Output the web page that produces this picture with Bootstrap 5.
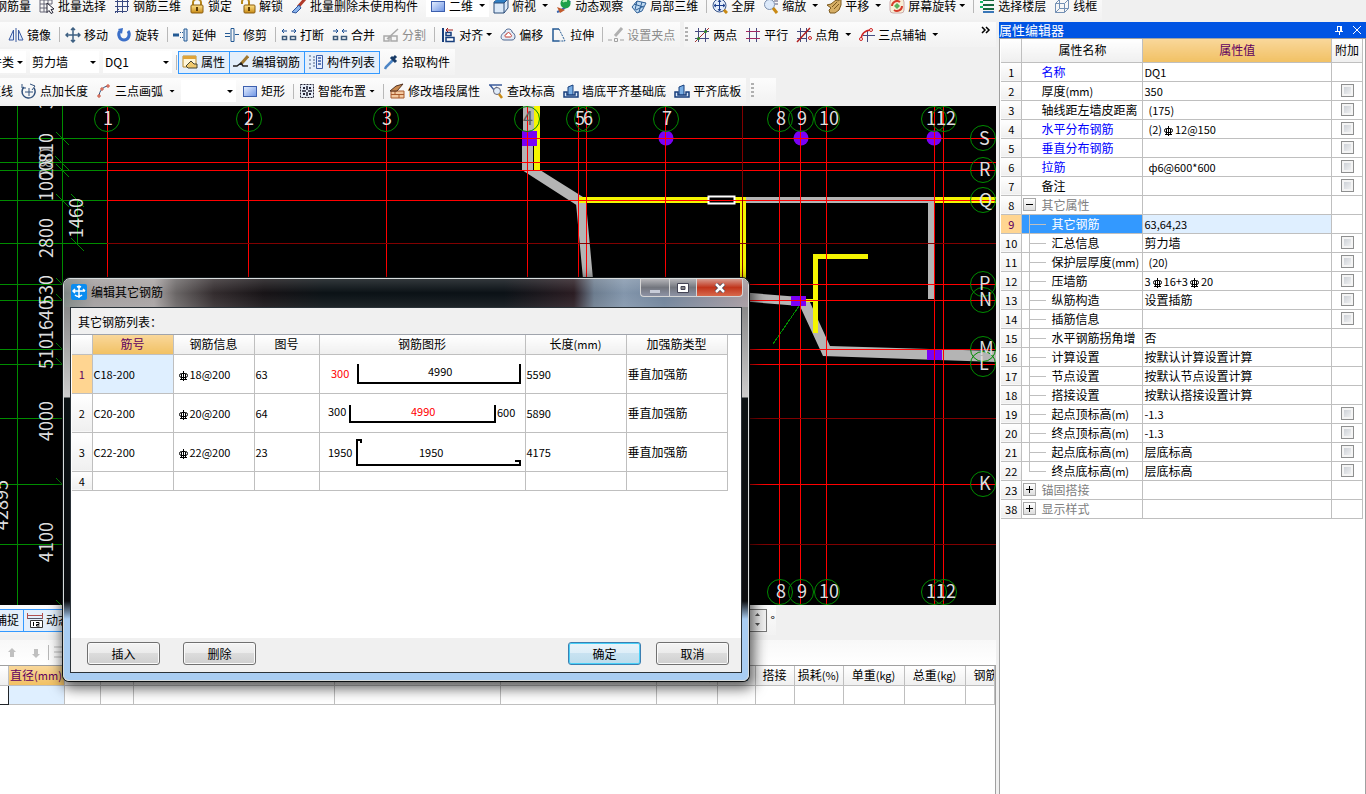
<!DOCTYPE html>
<html lang="zh-CN">
<head>
<meta charset="utf-8">
<meta name="viewport" content="width=device-width, initial-scale=1">
<title>编辑其它钢筋</title>
<link href="https://cdn.jsdelivr.net/npm/bootstrap@5.3.0/dist/css/bootstrap.min.css" rel="stylesheet">
<style>
  body { font: 12px/16px "Noto Sans CJK SC", sans-serif; color: #000; background: #f0f0f0; overflow: hidden; }
  svg { flex: none; }
  .ic { width: 16px; height: 16px; display: block; }
  .num { font-size: 11px; }

  /* toolbars */
  .bar-row { height: 26px; overflow: hidden; }
  .bar-row.first { height: 20px; align-items: flex-end; }
  .bar-row.first .strip { height: 29px; }
  .bar-row.second { height: 25px; margin: 2px 0; }
  .bar-row.third { margin-bottom: 3px; }
  .bar-row.fourth { margin-bottom: 2px; }
  .strip { height: 100%; display: flex; align-items: center; flex: none; background: linear-gradient(#fcfcfc, #f2f2f2); padding-right: 1px; }
  .tool { display: flex; align-items: center; gap: 3px; height: 22px; padding: 0 4px; border: 0; background: none; white-space: nowrap; color: inherit; }
  .tool:disabled { color: #8c8c8c; }
  .tool.toggled { height: 23px; padding: 0 4px 0 3px; border: 1px solid #3399ff; background: #e4effb; margin-right: -1px; }
  .tool .caret { width: 6px; height: 3px; background: #000; clip-path: polygon(0 0, 100% 0, 50% 100%); }
  .tool .caret.wide { margin-left: 3px; }
  .more { height: 15px; }
  .sep { width: 1px; height: 15px; background: #b8b8b8; margin: 0 1px 0 4px; flex: none; }
  .dots { width: 3px; height: 16px; margin: 0 2px 0 1px; background: repeating-linear-gradient(#b0b0b0 0 2px, transparent 2px 4px); flex: none; }
  .combo { height: 22px; padding: 0 20px 0 2px; border: 0; border-radius: 0; font-size: 12px; line-height: 20px; color: #000; background-color: #fff; background-size: 6px 3px; background-position: right 3px center;
    background-image: url("data:image/svg+xml,%3Csvg xmlns='http://www.w3.org/2000/svg' viewBox='0 0 6 3'%3E%3Cpath d='M0 0h6L3 3z'/%3E%3C/svg%3E"); }
  .combo.kind { width: 50px; padding-right: 10px; margin-left: -24px; }
  .combo.wall { width: 69px; }
  .combo.arc { width: 55px; margin: 0 2px; }
  .clipped-start { margin-left: -11px; }
  .clipped-first { margin-left: -9px; }

  /* drawing canvas */
  .plan { background: #000; flex: 1 1 0; min-height: 0; overflow: hidden; }
  .plan svg { width: 100%; height: 100%; display: block; }
  .plan text { font: 18px "Noto Sans CJK SC", sans-serif; fill: #dedede; }
  .plan text.dim { fill: #5c5c5c; }

  /* grids */
  .grid { table-layout: fixed; border-collapse: collapse; font-size: 12px; line-height: 16px; }
  .grid th, .grid td { border: 1px solid #bfbfbf; border-top: 0; border-left: 0; padding: 0 0 0 1px; font-weight: 400; white-space: nowrap; overflow: hidden; background: #fff; }
  .grid th { text-align: center; background: linear-gradient(#fff, #efefef); padding: 0; }
  .grid thead th.hot { background: linear-gradient(#f9d79a, #f1c164); color: #600060; }
  .grid tbody th { font-size: 11px; }
  .grid tbody th.hot { background: #ffd591; color: #600060; }
  .grid td.pick { background: #dfefff; }
  .bar-mark { width: 9px; height: 10px; margin: 0 2px; }
  td > .bar-mark { margin-left: 4px; }

  /* property panel */
  .props { width: 370px; flex: none; }
  .props-title { height: 16px; background: #0054e3; color: #fff; font-size: 13px; margin: 2px 0 0 3px; }
  .props-title button { border: 0; background: none; padding: 0; color: #fff; width: 18px; height: 16px; }
  .props-body { margin-left: 3px; border: 1px solid #a0a0a0; border-bottom: 0; padding: 0 2px 0 1px; background: #fff; }
  .props .grid tr { height: 19px; }
  .props .grid thead tr { height: 23px; }
  .cell-name { display: flex; align-items: center; height: 18px; overflow: hidden; padding-left: 19px; line-height: 18px; }
  .cell-name.leaf { padding-left: 7px; }
  .cell-name.leaf::before { content: ""; width: 17px; height: 18px; margin-right: 5px; flex: none; border-left: 1px solid #bfbfbf; background: linear-gradient(#bfbfbf, #bfbfbf) 0 9px / 17px 1px no-repeat; }
  .cell-name.end::before { height: 10px; align-self: flex-start; }
  .cell-name.group { padding-left: 1px; color: #808080; }
  .cell-name.link { color: #0000ff; }
  .picked .cell-name { background: #3399ff; color: #fff; }
  .fold { width: 13px; height: 13px; border: 1px solid #a8a8a8; background: linear-gradient(#fff, #ddd); padding: 0; margin-right: 5px; display: flex; flex: none; }
  .tick { appearance: none; width: 13px; height: 13px; margin: 0; display: block; border: 1px solid #8e8f8f; background: linear-gradient(135deg, #c4c9d0, #f8f8f8) padding-box; box-shadow: inset 0 0 0 2px #f4f4f4; }

  /* lower panes */
  .lower { height: 189px; flex: none; }
  .snap { height: 34px; }
  .snap .strip { height: 30px; width: 776px; }
  .mini { height: 26px; padding-top: 1px; }
  .mini .strip { width: 100%; padding-left: 4px; background: linear-gradient(#f8f8f8, #fff); }
  .spin { width: 80px; height: 23px; border: 1px solid #777; background: #fff; }
  .spin input { width: 60px; border: 0; padding: 0; }
  .spin button { width: 16px; height: 10px; border: 0; padding: 0; background: #f4f4f4; display: flex; align-items: center; justify-content: center; }
  .lower .grid tr { height: 19px; }
  .sheet { flex: 1; background: #fff; border-top: 1px solid #a0a0a0; border-right: 1px solid #a0a0a0; overflow: hidden; }

  /* dialog */
  .dlg { position: absolute; left: 63px; top: 278px; width: 686px; border: 1px solid #d8dcdc; border-radius: 7px 7px 6px 6px; padding: 0 6px 7px; overflow: hidden; box-shadow: 2px 4px 14px 3px rgba(0,0,0,.65), 0 0 0 1px #1a2226;
    background: linear-gradient(#77807d 0, #888 26px, #ccc 118px, #0b1214 119px, #0b0d10 322px, #a9cdf2 340px); }
  .dlg-head { height: 28px; margin: 0 -6px; padding: 0 5px 2px 7px; display: flex; gap: 4px;
    background: linear-gradient(rgba(255,255,255,.16), rgba(255,255,255,0) 50%, rgba(255,255,255,.08)), linear-gradient(to right, #7c8482 0, #a29e9e 30px, #a8a3a3 90px, #6a6666 112px, #332c2e 150px, #171316 200px, #0b1216 260px, #0b1116 440px, #2a1c22 510px, #6c7c8e 530px, #8396ac 560px, #70839a 600px, #a59aa0 684px); }
  .dlg-body { border: 1px solid #2a3238; background: #f0f0f0; display: flex; flex-direction: column; }
  .dlg-label { height: 26px; line-height: 28px; padding-left: 7px; }
  .dlg-list { height: 304px; background: #fff; border-top: 1px solid #a0a4ac; padding-left: 1px; }
  .dlg-list .grid tr { height: 39px; }
  .dlg-list .grid thead tr { height: 19px; }
  .dlg-list .grid tr.blank { height: 19px; }
  .dlg-list .grid svg text { font: 11px "Noto Sans CJK SC", sans-serif; }
  .dlg-foot { display: flex; gap: 23px; padding: 4px 12px 7px 16px; }
  .cap { height: 18px; padding: 0; border: 1px solid #d5d5d5; border-top: 0; border-right: 0; background: linear-gradient(#b5b5b9, #73767e 50%, #8d92a4); display: flex; justify-content: center; align-items: center; }
  .cap.shut { width: 47px; border-right: 1px solid #d5d5d5; border-radius: 0 0 4px 0; background: linear-gradient(#d89a8e, #c1351c 50%, #d8694c); }
  .cap.lo { width: 29px; border-radius: 0 0 0 4px; }
  .cap.mid { width: 27px; }
  .push { height: 23px; border: 1px solid #707070; border-radius: 3px; padding: 0; width: 73px; font-size: 12px; line-height: 20px; color: #000; background: linear-gradient(#f4f4f4, #ebebeb 49%, #dcdcdc 50%, #cfcfcf); box-shadow: inset 0 0 0 1px #fafafa; }
  .push.go { border-color: #3c7fb1; background: linear-gradient(#eaf3f9, #ddeef8 49%, #c8e2f1 50%, #bcdcec); box-shadow: inset 0 0 0 1px #48d0f8; margin-right: -8px; }
</style>
</head>
<body>

<svg width="0" height="0" class="position-absolute" aria-hidden="true">
  <defs>
    <linearGradient id="gb" x1="0" y1="0" x2="1" y2="1"><stop offset="0" stop-color="#e8f1ff"/><stop offset="1" stop-color="#6c93e4"/></linearGradient>
    <linearGradient id="gy" x1="0" y1="0" x2="0" y2="1"><stop offset="0" stop-color="#ffe38a"/><stop offset="1" stop-color="#c98a14"/></linearGradient>
    <symbol id="i-batch" viewBox="0 0 16 16"><path d="M1 2h12M1 6h12M1 10h8M1 14h8M1 1v13M5 1v13M9 1v9M13 1v5" stroke="#667" fill="none"/><path d="M8 5l7 6-3 .5 2 3-2 1-2-3-2 2z" fill="#fff" stroke="#223"/></symbol>
    <symbol id="i-net" viewBox="0 0 16 16"><path d="M1 3.500h14M1 8.500h14M1 13.500h12M3.500 1v14M8.500 1v14M13.500 1v12M1 15l4-4M12 4l3-3" stroke="#3a4a80" fill="none"/></symbol>
    <symbol id="i-lock" viewBox="0 0 16 16"><path d="M4 8V4.500a4 3.500 0 0 1 8 0V8" fill="none" stroke="#b5851a" stroke-width="2"/><rect x="2" y="7" width="12" height="8" rx="1" fill="url(#gy)" stroke="#8a5d10"/><path d="M8 9v4" stroke="#5b3b05" stroke-width="2"/></symbol>
    <symbol id="i-unlock" viewBox="0 0 16 16"><path d="M2 6V4a3 3 0 0 1 7 0v4" fill="none" stroke="#b5851a" stroke-width="2"/><rect x="4" y="7" width="11" height="8" rx="1" fill="url(#gy)" stroke="#8a5d10"/><path d="M9 9v4" stroke="#5b3b05" stroke-width="2"/></symbol>
    <symbol id="i-brush" viewBox="0 0 16 16"><path d="M14 1L7 9" stroke="#b03a2a" stroke-width="3"/><path d="M8 7l2 3-5 5-4-1z" fill="#8ab4ec" stroke="#31569c"/></symbol>
    <symbol id="i-rect" viewBox="0 0 16 16"><rect x="1.500" y="3.500" width="13" height="10" fill="url(#gb)" stroke="#3c5fae"/></symbol>
    <symbol id="i-cube" viewBox="0 0 16 16"><path d="M1 4l4-3h10v9l-4 5H1z" fill="#dbe9f8" stroke="#2b4c78"/><path d="M1 4l4-3h10l-4 4H1z" fill="#2f7fc4"/><path d="M11 5v10M1 5h10l4-4" fill="none" stroke="#2b4c78"/></symbol>
    <symbol id="i-orbit" viewBox="0 0 16 16"><path d="M1 14c4-1 10-5 13-11" stroke="#3665b0" stroke-width="2" fill="none"/><circle cx="9.500" cy="5.500" r="5" fill="#1ea04a"/><path d="M7 4a3 2 0 0 1 4-1" stroke="#b8f0b8" fill="none" stroke-width="2"/><path d="M1 9l8 3-5 3z" fill="#c25a2c"/></symbol>
    <symbol id="i-local" viewBox="0 0 16 16"><path d="M1 9l5-6 9 2-4 8-5 2z" fill="#bfdaf2" stroke="#2e5f96"/><path d="M3 6l9 3M6 3L4 12M11 4L8 14M5 12l8-4" stroke="#2e5f96" fill="none"/></symbol>
    <symbol id="i-full" viewBox="0 0 16 16"><circle cx="7.500" cy="7.500" r="6.500" fill="#e4edfa" stroke="#38568c"/><path d="M7.500 2v11M2 7.500h11M6 4l1.500-2L9 4M6 11l1.500 2L9 11M4 6L2 7.500 4 9M11 6l2 1.500L11 9" stroke="#1c3f8c" fill="none"/><path d="M12 12l3 3" stroke="#c98a14" stroke-width="3"/></symbol>
    <symbol id="i-zoom" viewBox="0 0 16 16"><circle cx="6.500" cy="6.500" r="5" fill="#dce9fa" stroke="#7c8fae"/><path d="M10 10l4 5" stroke="#c98a14" stroke-width="3"/><path d="M11 3h4M12 6h3" stroke="#557"/></symbol>
    <symbol id="i-hand" viewBox="0 0 16 16"><path d="M1 7l4-1 5-4 2 1 3-2v6l-2 5-4 3H4l-1-3 2-2z" fill="#d6ae66" stroke="#7d5a1e"/><path d="M6 9l5-5M8 11l5-5" stroke="#7d5a1e"/></symbol>
    <symbol id="i-spin" viewBox="0 0 16 16"><rect x="1" y="1" width="14" height="14" rx="3" fill="#f7f0d8" stroke="#caa"/><path d="M3 8a5 5 0 0 1 8-4M13 8a5 5 0 0 1-8 4" stroke="#d63c2a" stroke-width="2" fill="none"/><path d="M5 8l3-3 3 3-3 3z" fill="#5bb15a"/></symbol>
    <symbol id="i-floor" viewBox="0 0 16 16"><path d="M4 2h11M4 7h11M4 11h11" stroke="#16693d" stroke-width="2"/><path d="M1 4h3M1 9h3" stroke="#1b6" stroke-width="2"/><path d="M4 13h11v2H4z" fill="#3a77b8"/></symbol>
    <symbol id="i-wire" viewBox="0 0 16 16"><path d="M1.500 5.500h9v9h-9zM5.500 1.500h9v9h-9zM1.500 5.500l4-4M10.500 5.500l4-4M1.500 14.500l4-4M10.500 14.500l4-4" fill="none" stroke="#7390b4"/></symbol>
    <symbol id="i-mirror" viewBox="0 0 16 16"><path d="M5.500 3v10H1zM10.500 3v10H15z" fill="#dfe9fb" stroke="#3a5aa0"/><path d="M8 1v14" stroke="#3a5aa0"/></symbol>
    <symbol id="i-move" viewBox="0 0 16 16"><path d="M8 1v14M1 8h14M6 3l2-2 2 2M6 13l2 2 2-2M3 6L1 8l2 2M13 6l2 2-2 2" fill="none" stroke="#3f6183" stroke-width="1.500"/></symbol>
    <symbol id="i-rot" viewBox="0 0 16 16"><path d="M4 4C1 8 4 13 8 13s7-5 4-9" fill="none" stroke="#3b6fc8" stroke-width="3"/><path d="M7 1L2 2l4 5z" fill="#3b6fc8"/></symbol>
    <symbol id="i-extend" viewBox="0 0 16 16"><path d="M0 8h6" stroke="#245a94" stroke-width="3"/><path d="M7 5.500h3M7 10.500h3" stroke="#245a94" stroke-dasharray="1 1"/><path d="M11 2h3v12h-3z" fill="#cfe0f4" stroke="#245a94"/></symbol>
    <symbol id="i-trim" viewBox="0 0 16 16"><path d="M1 6.500h5M1 9.500h5M7 1.500h3v13H7zM11 7.500h4" fill="none" stroke="#245a94"/></symbol>
    <symbol id="i-break" viewBox="0 0 16 16"><path d="M1 4h5M10 4h5M3 2L1 4l2 2M13 2l2 2-2 2" stroke="#1c4f94" fill="none"/><path d="M1.500 9.500h4v3h-4zM9.500 9.500h5v3h-5z" fill="#fff" stroke="#3b5878" stroke-width="1.500"/></symbol>
    <symbol id="i-join" viewBox="0 0 16 16"><path d="M1 4h5M10 4h5M4 2l2 2-2 2M12 2l-2 2 2 2" stroke="#1c4f94" fill="none"/><path d="M1.500 9.500h4v3h-4zM9.500 9.500h5v3h-5z" fill="#fff" stroke="#3b5878" stroke-width="1.500"/></symbol>
    <symbol id="i-split" viewBox="0 0 16 16"><path d="M1 9h5v5H1zM8 9h6v5H8zM4 12L15 2" stroke="#a9a9a9" fill="none" stroke-width="1.500"/></symbol>
    <symbol id="i-align" viewBox="0 0 16 16"><path d="M3 1v14" stroke="#173e7c" stroke-width="2"/><path d="M6 5.500h5v3H6zM6 10.500h8v4H6z" fill="#fff" stroke="#173e7c" stroke-width="1.500"/><path d="M13 3H6l2-2M6 3l2 2" stroke="#a01b1b" fill="none"/></symbol>
    <symbol id="i-offset" viewBox="0 0 16 16"><path d="M5 5c0-4 7-4 7 0 4 2 4 8 0 8H4C0 13 0 7 5 5z" fill="#e4ebf5" stroke="#4c6690"/><path d="M7 7c0-2 3-2 3 0 2 1 2 3 0 3H6C4 10 5 7 7 7z" fill="#fff" stroke="#c4392d"/></symbol>
    <symbol id="i-stretch" viewBox="0 0 16 16"><path d="M8 2H2v12h6" fill="none" stroke="#245a94" stroke-width="1.500"/><path d="M8 2l6 12H8" fill="none" stroke="#245a94" stroke-dasharray="2 1"/></symbol>
    <symbol id="i-clamp" viewBox="0 0 16 16"><path d="M14 1L7 9" stroke="#b0b0b0" stroke-width="3"/><path d="M0 13h4M12 13h4M6.500 11.500h3v3h-3z" stroke="#a0a0a0" fill="none"/></symbol>
    <symbol id="i-two" viewBox="0 0 16 16"><path d="M4.500 1v14M11.500 1v14M1 4.500h14M1 11.500h14" stroke="#454a7e"/><path d="M1 15L15 1" stroke="#a03030"/><circle cx="4.500" cy="11.500" r="1.500" fill="#2b8a2b"/><circle cx="11.500" cy="4.500" r="1.500" fill="#2b8a2b"/></symbol>
    <symbol id="i-para" viewBox="0 0 16 16"><path d="M4.500 1v14M11.500 1v14" stroke="#454a7e"/><path d="M1 4.500h14M1 11.500h14" stroke="#a02860"/></symbol>
    <symbol id="i-angle" viewBox="0 0 16 16"><path d="M4.500 1v14M10.500 1v14M1 4.500h14M1 11.500h10" stroke="#454a7e"/><path d="M1 15L14 1" stroke="#b02020" stroke-width="1.500"/><circle cx="14" cy="11" r="1.500" fill="none" stroke="#c22"/></symbol>
    <symbol id="i-aux" viewBox="0 0 16 16"><path d="M8.500 3v12M4 8.500h12" stroke="#454a7e"/><path d="M2 13c0-6 4-10 10-10" fill="none" stroke="#c22" stroke-width="1.500"/><circle cx="2" cy="12" r="1.500" fill="#fff" stroke="#c22"/><circle cx="12" cy="3" r="1.500" fill="#fff" stroke="#c22"/></symbol>
    <symbol id="i-prop" viewBox="0 0 16 16"><path d="M1 2h13v11H1z" fill="#fff6d8" stroke="#b98b2c"/><path d="M1 2h13v3H1z" fill="#e0a43a"/><path d="M4 12l5-5 3 3h3v4H6z" fill="#f0c96c" stroke="#443"/></symbol>
    <symbol id="i-edit" viewBox="0 0 16 16"><path d="M15 2L8 10" stroke="#a07830" stroke-width="3"/><path d="M0 12h4l4-3 2 3h5" stroke="#222" fill="none" stroke-width="1.500"/></symbol>
    <symbol id="i-list" viewBox="0 0 16 16"><path d="M1 2h3M1 6h3M1 10h3M1 14h3M6 2v12" stroke="#4a5f84" stroke-dasharray="2 1"/><path d="M8.500 1.500h6v13h-6z" fill="#e6eefc" stroke="#3b5ea8"/><path d="M10 4h3M10 7h3M10 10h3" stroke="#3b5ea8" stroke-width="1.500"/></symbol>
    <symbol id="i-pick" viewBox="0 0 16 16"><path d="M10 6l-7 7-1 2" stroke="#4d86c6" stroke-width="2.500" fill="none"/><path d="M8 3l5 5M10 5l3-3" stroke="#173a66" stroke-width="3"/></symbol>
    <symbol id="i-plen" viewBox="0 0 16 16"><path d="M3 4a6.500 6.500 0 1 0 10 1" fill="none" stroke="#33527c" stroke-width="1.500"/><path d="M8 5v8M4 9h8M1 1v4h4M9 1l5 2-3 4" stroke="#33527c" fill="none"/></symbol>
    <symbol id="i-arc" viewBox="0 0 16 16"><path d="M3 14C3 8 7 3 13 3" stroke="#33527c" fill="none"/><path d="M2 12h2v2H2zM5 5h2v2H5zM11 2h2v2h-2z" fill="#fff" stroke="#c8452c"/></symbol>
    <symbol id="i-smart" viewBox="0 0 16 16"><rect x="1.500" y="1.500" width="13" height="13" fill="#e6edf8" stroke="#223" stroke-dasharray="2 1"/><path d="M8 3v4M8 9v4M3 8h4M9 8h4" stroke="#223" stroke-width="1.500"/><path d="M4 4h2v2H4zM10 4h2v2h-2zM4 10h2v2H4zM10 10h2v2h-2z" fill="#223"/></symbol>
    <symbol id="i-wall" viewBox="0 0 16 16"><path d="M2 8h13v7H2z" fill="#f2c9a0" stroke="#a85a2c"/><path d="M2 11.500h13M6 8v3M10 11v4" stroke="#a85a2c"/><path d="M1 8l6-5 7-2-6 7z" fill="#c98a50" stroke="#532"/></symbol>
    <symbol id="i-elev" viewBox="0 0 16 16"><path d="M1 2h13M2 2l4 5 3-3" stroke="#3c5c9c" fill="none" stroke-width="1.500"/><circle cx="9" cy="8" r="3.500" fill="#e0ecfa" stroke="#667"/><path d="M11 11l3 4" stroke="#c98a14" stroke-width="2.500"/></symbol>
    <symbol id="i-base" viewBox="0 0 16 16"><path d="M5 12V4l5-2v10" fill="#79aee4" stroke="#173e7c"/><path d="M1 14V9h3v3h8V9h3v5z" fill="#d6e6f8" stroke="#173e7c" stroke-width="1.500"/></symbol>
    <symbol id="i-dyn" viewBox="0 0 16 16"><path d="M.500 1v6M15.500 1v6M1 3.500h14" stroke="#b05050" fill="none"/><path d="M1 6.500h14" stroke="#556"/><path d="M3.500 8.500h12v7h-12z" fill="#fff" stroke="#333"/><path d="M6.500 10v4M9 10.500h3v2H9.500v1.500h3" stroke="#000" fill="none"/></symbol>
    <symbol id="i-up" viewBox="0 0 16 16"><path d="M8 3l4 4H10v5H6V7H4z" fill="#c0c0c0"/></symbol>
    <symbol id="i-down" viewBox="0 0 16 16"><path d="M8 13l4-4H10V4H6v5H4z" fill="#c0c0c0"/></symbol>
    <symbol id="i-rows" viewBox="0 0 16 16"><path d="M0 2h16M0 7h16M0 12h16" stroke="#bbb"/></symbol>
    <symbol id="rebar" viewBox="0 0 9 10"><path d="M2.500 2.500h4q2 0 2 2t-2 2h-4q-2 0-2-2t2-2zM4.500 0v10M2.500 3v6M6.500 3v6M1 8.500h7" fill="none" stroke="#000"/></symbol>
  </defs>
</svg>

<div class="d-flex flex-column vh-100 position-relative">

  <div class="bar-row first d-flex">
    <div class="strip">
      <button class="tool clipped-first">钢筋量</button>
      <button class="tool"><svg class="ic"><use href="#i-batch"/></svg>批量选择</button>
      <button class="tool"><svg class="ic"><use href="#i-net"/></svg>钢筋三维</button>
      <button class="tool"><svg class="ic"><use href="#i-lock"/></svg>锁定</button>
      <button class="tool"><svg class="ic"><use href="#i-unlock"/></svg>解锁</button>
      <button class="tool me-1"><svg class="ic"><use href="#i-brush"/></svg>批量删除未使用构件</button>
      <button class="tool bg-white"><svg class="ic"><use href="#i-rect"/></svg>二维<span class="caret wide"></span></button>
      <button class="tool"><svg class="ic"><use href="#i-cube"/></svg>俯视<span class="caret wide"></span></button>
      <button class="tool"><svg class="ic"><use href="#i-orbit"/></svg>动态观察</button>
      <button class="tool"><svg class="ic"><use href="#i-local"/></svg>局部三维</button>
      <span class="sep"></span>
      <button class="tool"><svg class="ic"><use href="#i-full"/></svg>全屏</button>
      <button class="tool"><svg class="ic"><use href="#i-zoom"/></svg>缩放<span class="caret wide"></span></button>
      <button class="tool"><svg class="ic"><use href="#i-hand"/></svg>平移<span class="caret wide"></span></button>
      <button class="tool pe-1"><svg class="ic"><use href="#i-spin"/></svg>屏幕旋转<span class="caret"></span></button>
      <span class="sep"></span>
      <button class="tool"><svg class="ic"><use href="#i-floor"/></svg>选择楼层</button>
      <button class="tool"><svg class="ic"><use href="#i-wire"/></svg>线框</button>
    </div>
  </div>

  <div class="d-flex flex-grow-1" style="min-height:0">
    <main class="d-flex flex-column flex-grow-1" style="min-width:0">

      <div class="bar-row second d-flex">
        <div class="strip ps-1">
          <button class="tool"><svg class="ic"><use href="#i-mirror"/></svg>镜像</button>
          <span class="sep"></span>
          <button class="tool"><svg class="ic"><use href="#i-move"/></svg>移动</button>
          <button class="tool"><svg class="ic"><use href="#i-rot"/></svg>旋转</button>
          <span class="sep"></span>
          <button class="tool"><svg class="ic"><use href="#i-extend"/></svg>延伸</button>
          <button class="tool"><svg class="ic"><use href="#i-trim"/></svg>修剪</button>
          <span class="sep"></span>
          <button class="tool"><svg class="ic"><use href="#i-break"/></svg>打断</button>
          <button class="tool"><svg class="ic"><use href="#i-join"/></svg>合并</button>
          <button class="tool" disabled><svg class="ic"><use href="#i-split"/></svg>分割</button>
          <span class="sep"></span>
          <button class="tool"><svg class="ic"><use href="#i-align"/></svg>对齐<span class="caret"></span></button>
          <button class="tool"><svg class="ic"><use href="#i-offset"/></svg>偏移</button>
          <button class="tool"><svg class="ic"><use href="#i-stretch"/></svg>拉伸</button>
          <span class="sep"></span>
          <button class="tool" disabled><svg class="ic"><use href="#i-clamp"/></svg>设置夹点</button>
        </div>
        <div class="strip flex-grow-1 ms-1">
          <span class="dots"></span>
          <button class="tool"><svg class="ic"><use href="#i-two"/></svg>两点</button>
          <button class="tool"><svg class="ic"><use href="#i-para"/></svg>平行</button>
          <button class="tool"><svg class="ic"><use href="#i-angle"/></svg>点角<span class="caret wide"></span></button>
          <button class="tool"><svg class="ic"><use href="#i-aux"/></svg>三点辅轴<span class="caret wide"></span></button>
          <button class="tool more ms-auto px-0 me-1 align-self-start" aria-label="更多"><svg width="10" height="8" viewBox="0 0 10 8"><path d="M1 1l3 3-3 3M5 1l3 3-3 3" fill="none" stroke="#000" stroke-width="1.500"/></svg></button>
        </div>
      </div>

      <div class="bar-row third d-flex">
        <div class="strip">
          <select class="combo kind form-select me-1" id="kind" aria-label="构件类型"><option>构件类</option></select>
          <select class="combo wall form-select me-1" id="wall" aria-label="构件"><option>剪力墙</option></select>
          <select class="combo wall form-select" id="member" aria-label="构件名称"><option>DQ1</option></select>
          <span class="sep"></span>
          <button class="tool toggled"><svg class="ic"><use href="#i-prop"/></svg>属性</button>
          <button class="tool toggled"><svg class="ic"><use href="#i-edit"/></svg>编辑钢筋</button>
          <button class="tool toggled"><svg class="ic"><use href="#i-list"/></svg>构件列表</button>
          <button class="tool"><svg class="ic"><use href="#i-pick"/></svg>拾取构件</button>
        </div>
      </div>

      <div class="bar-row fourth d-flex">
        <div class="strip">
          <button class="tool px-0 pe-1 clipped-start">直线</button>
          <button class="tool"><svg class="ic"><use href="#i-plen"/></svg>点加长度</button>
          <button class="tool"><svg class="ic"><use href="#i-arc"/></svg>三点画弧<span class="caret wide"></span></button>
          <select class="combo arc form-select" id="arcval" aria-label="半径"><option></option></select>
          <button class="tool"><svg class="ic"><use href="#i-rect"/></svg>矩形</button>
          <span class="sep"></span>
          <button class="tool"><svg class="ic"><use href="#i-smart"/></svg>智能布置<span class="caret"></span></button>
          <span class="sep"></span>
          <button class="tool"><svg class="ic"><use href="#i-wall"/></svg>修改墙段属性</button>
          <button class="tool"><svg class="ic"><use href="#i-elev"/></svg>查改标高</button>
          <button class="tool"><svg class="ic"><use href="#i-base"/></svg>墙底平齐基础底</button>
          <button class="tool"><svg class="ic"><use href="#i-base"/></svg>平齐底板</button>
        </div>
        <div class="strip ms-1"><span class="dots"></span><span class="h-100 px-2">&nbsp;</span></div>
      </div>

      <div class="plan">
        <svg viewBox="0 106 996 499" preserveAspectRatio="xMinYMin slice" role="img" aria-label="平面图">
          <g fill="#b4b4b4">
            <path d="M523 106h11v40h-1v24h-11v-24h1zM522 170h18l43 27-5 9zM576 203h10l7 76h-10zM588 280l212 17v9l-212-17zM746 197h189v6H746zM928 203h6v96h-6zM799 304l10-4 21 46 166 5v11l-173-6z"/>
          </g>
          <path fill="#f5f500" d="M534 106h6v64h-6zM578 197h168v6H578zM935 197h61v6h-61zM740 203h6v80h-6zM813 254h55v5h-50v74h-5zM805 299h8v3h-8z"/>
          <path fill="#7a00f5" d="M522 131h15v15h-15zM791 296h15v10h-15zM927 349h15v11h-15z"/>
          <g fill="#7a00f5"><circle cx="666" cy="138" r="7.500"/><circle cx="801" cy="138" r="7.500"/><circle cx="934" cy="138" r="7.500"/></g>
          <rect x="708.500" y="196.500" width="26" height="7" stroke="#fff" stroke-width="2"/>
          <g stroke="#008c00" fill="none" shape-rendering="crispEdges">
            <path d="M17.500 106v499M62.500 106v499M77.500 200v44M0 138.500h107M0 162.500h107M0 170.500h107M0 200.500h107M0 243.500h107M0 284.500h107M0 300.500h107M0 349.500h107M0 364.500h107M0 418.500h107M0 484.500h107M0 544.500h107"/>
            <path d="M56 132l13 13M55 156l14 14M56 164l13 13M56 194l13 13M71 194l13 13M71 238l13 13M56 278l13 13M56 294l13 13M56 343l13 13M56 358l13 13M56 478l13 13M56 600l13 13M773 344l26-38"/>
          </g>
          <g fill="none" shape-rendering="crispEdges">
            <path stroke="#ff0000" d="M107.500 106v499M248.500 106v499M386.500 106v499M527.500 106v499M578.500 106v499M586.500 106v499M665.500 106v499M779.500 106v499M800.500 106v499M826.500 106v499M934.500 106v499M943.500 106v499M107 138.500h889M107 162.500h889M107 170.500h889M107 200.500h889M107 284.500h889M107 300.500h889M107 349.500h889M107 364.500h889M107 484.500h889"/>
            <path stroke="#800000" d="M742.500 106v499M107 243.500h889M107 418.500h889M107 544.500h889"/>
          </g>
          <g fill="none" stroke="#008c00">
            <circle cx="107" cy="119" r="12.500"/><circle cx="249" cy="119" r="12.500"/><circle cx="386" cy="119" r="12.500"/><circle cx="527" cy="119" r="12.500"/><circle cx="579" cy="119" r="12.500"/><circle cx="587" cy="119" r="12.500"/><circle cx="666" cy="119" r="12.500"/><circle cx="780" cy="119" r="12.500"/><circle cx="801" cy="119" r="12.500"/><circle cx="827" cy="119" r="12.500"/><circle cx="934" cy="119" r="12.500"/><circle cx="944" cy="119" r="12.500"/>
            <circle cx="780" cy="592" r="12.500"/><circle cx="801" cy="592" r="12.500"/><circle cx="827" cy="592" r="12.500"/><circle cx="934" cy="592" r="12.500"/><circle cx="944" cy="592" r="12.500"/>
            <circle cx="983" cy="138" r="12.500"/><circle cx="983" cy="170" r="12.500"/><circle cx="983" cy="200" r="12.500"/><circle cx="983" cy="284" r="12.500"/><circle cx="983" cy="300" r="12.500"/><circle cx="983" cy="349" r="12.500"/><circle cx="983" cy="364" r="12.500"/><circle cx="983" cy="484" r="12.500"/>
          </g>
          <g>
            <text x="103" y="125">1</text><text x="244" y="125">2</text><text x="382" y="125">3</text><text x="523" y="125" class="dim">4</text><text x="575" y="125">5</text><text x="583" y="125">6</text><text x="662" y="125">7</text><text x="776" y="125">8</text><text x="797" y="125">9</text><text x="819" y="125">10</text><text x="926" y="125">11</text><text x="936" y="125">12</text>
            <text x="776" y="598">8</text><text x="797" y="598">9</text><text x="819" y="598">10</text><text x="926" y="598">11</text><text x="936" y="598">12</text>
            <text x="979" y="145">S</text><text x="979" y="176">R</text><text x="979" y="207">Q</text><text x="979" y="290">P</text><text x="979" y="306">N</text><text x="979" y="355">M</text><text x="979" y="370">L</text><text x="979" y="490">K</text>
          </g>
          <g>
            <text transform="translate(53 109) rotate(-90)">3</text>
            <text transform="translate(53 163) rotate(-90)">810</text>
            <text transform="translate(53 178) rotate(-90)" opacity=".7">280</text>
            <text transform="translate(53 201) rotate(-90)">1000</text>
            <text transform="translate(53 258) rotate(-90)">2800</text>
            <text transform="translate(83 238) rotate(-90)">1460</text>
            <text transform="translate(53 305) rotate(-90)">530</text>
            <text transform="translate(53 340) rotate(-90)">1640</text>
            <text transform="translate(53 369) rotate(-90)">510</text>
            <text transform="translate(53 441) rotate(-90)">4000</text>
            <text transform="translate(53 562) rotate(-90)">4100</text>
            <text transform="translate(8 530) rotate(-90)">42895</text>
          </g>
        </svg>
      </div>

      <div class="lower d-flex flex-column">
        <div class="snap">
          <div class="strip">
            <button class="tool toggled clipped-first">捕捉</button>
            <button class="tool toggled"><svg class="ic"><use href="#i-dyn"/></svg>动态输入</button>
            <div class="spin ms-auto d-flex">
              <input id="angle" type="text" aria-label="角度" class="me-auto">
              <div class="d-flex flex-column">
                <button aria-label="增加"><svg width="5" height="3"><path d="M0 3h5L2.500 0z" fill="#555"/></svg></button>
                <button aria-label="减少"><svg width="5" height="3"><path d="M0 0h5L2.500 3z" fill="#555"/></svg></button>
              </div>
            </div>
            <span class="ps-1">°</span>
          </div>
        </div>
        <div class="mini">
          <div class="strip">
            <button class="tool px-0 me-2" aria-label="上移"><svg class="ic"><use href="#i-up"/></svg></button>
            <button class="tool px-0" aria-label="下移"><svg class="ic"><use href="#i-down"/></svg></button>
            <span class="sep"></span>
            <button class="tool" aria-label="插入行"><svg class="ic"><use href="#i-rows"/></svg></button>
          </div>
        </div>
        <div class="sheet">
          <table class="grid w-100">
            <colgroup><col style="width:8px"><col style="width:56px"><col style="width:36px"><col style="width:33px"><col style="width:201px"><col style="width:166px"><col style="width:156px"><col style="width:61px"><col style="width:38px"><col style="width:39px"><col style="width:49px"><col style="width:61px"><col style="width:61px"><col></colgroup>
            <thead><tr><th></th><th class="hot">直径<span class="num">(mm)</span></th><th>级别</th><th>图号</th><th>图形</th><th>计算公式</th><th>公式描述</th><th>长度<span class="num">(mm)</span></th><th>根数</th><th>搭接</th><th>损耗<span class="num">(%)</span></th><th>单重<span class="num">(kg)</span></th><th>总重<span class="num">(kg)</span></th><th class="text-start ps-2">钢筋归类</th></tr></thead>
            <tbody><tr><td class="border-end border-dark"></td><td class="pick"></td><td></td><td></td><td></td><td></td><td></td><td></td><td></td><td></td><td></td><td></td><td></td><td></td></tr></tbody>
          </table>
        </div>
      </div>
    </main>

    <aside class="props d-flex flex-column">
      <div class="props-title d-flex align-items-center">
        <span class="me-auto">属性编辑器</span>
        <button aria-label="固定"><svg width="9" height="10" viewBox="0 0 9 10" class="d-block mx-auto"><path d="M2.500 1v5M6.500 1v5M2 1.500h5M0 6.500h8M4.500 7v3M5.500 1v5" stroke="#fff" fill="none"/></svg></button>
        <button aria-label="关闭"><svg width="8" height="8" viewBox="0 0 8 8" class="d-block mx-auto"><path d="M0 0l8 8M8 0L0 8" stroke="#fff"/></svg></button>
      </div>
      <div class="props-body flex-grow-1">
        <table class="grid" id="propGrid">
          <colgroup><col style="width:21px"><col style="width:121px"><col style="width:189px"><col style="width:31px"></colgroup>
          <thead><tr><th></th><th>属性名称</th><th class="hot">属性值</th><th>附加</th></tr></thead>
          <tbody></tbody>
        </table>
      </div>
    </aside>
  </div>

  <section class="dlg" role="dialog" aria-labelledby="dlgTitle">
    <div class="dlg-head">
      <svg class="align-self-center" width="16" height="16" viewBox="0 0 16 16"><rect width="16" height="16" rx="2" fill="#0a8cf0"/><path d="M8 2v12M2 7h12M4 5L2 7l2 2M12 5l2 2M6 3l2-1 2 1M4 11c2 2 5 2 7 0" stroke="#fff" fill="none" stroke-width="1.500"/></svg>
      <span class="align-self-center me-auto" id="dlgTitle">编辑其它钢筋</span>
      <div class="d-flex align-items-start">
        <button class="cap lo" aria-label="最小化"><svg width="10" height="14" viewBox="0 0 10 14"><path d="M0 9h10v3H0z" fill="#c8ccd8"/></svg></button>
        <button class="cap mid" aria-label="最大化"><svg width="12" height="10" viewBox="0 0 12 10"><path d="M.500.500h11v9H.500z" fill="#fff" stroke="#445"/><path d="M4 3.500h4v3H4z" fill="#888" stroke="#445"/></svg></button>
        <button class="cap shut" aria-label="关闭"><svg width="12" height="10" viewBox="0 0 12 10"><path d="M2 1l8 8M10 1L2 9" stroke="#445" stroke-width="4"/><path d="M2 1l8 8M10 1L2 9" stroke="#fff" stroke-width="2.500"/></svg></button>
      </div>
    </div>
    <div class="dlg-body">
      <div class="dlg-label">其它钢筋列表：</div>
      <div class="dlg-list">
        <table class="grid">
          <colgroup><col style="width:20px"><col style="width:81px"><col style="width:81px"><col style="width:65px"><col style="width:206px"><col style="width:101px"><col style="width:101px"></colgroup>
          <thead><tr><th></th><th class="hot">筋号</th><th>钢筋信息</th><th>图号</th><th>钢筋图形</th><th>长度<span class="num">(mm)</span></th><th>加强筋类型</th></tr></thead>
          <tbody>
            <tr><th class="hot">1</th><td class="num pick">C18-200</td><td class="num"><svg class="bar-mark"><use href="#rebar"/></svg>18@200</td><td class="num">63</td>
              <td class="p-0"><svg width="205" height="38" class="d-block"><path d="M38 9v19h162V9" fill="none" stroke="#000" stroke-width="2"/><text x="11" y="23" fill="#f00">300</text><text x="108" y="21">4990</text></svg></td><td class="num">5590</td><td>垂直加强筋</td></tr>
            <tr><th>2</th><td class="num">C20-200</td><td class="num"><svg class="bar-mark"><use href="#rebar"/></svg>20@200</td><td class="num">64</td>
              <td class="p-0"><svg width="205" height="38" class="d-block"><path d="M30 11v17h145V11" fill="none" stroke="#000" stroke-width="2"/><text x="8" y="22">300</text><text x="91" y="22" fill="#f00">4990</text><text x="177" y="23">600</text></svg></td><td class="num">5890</td><td>垂直加强筋</td></tr>
            <tr><th>3</th><td class="num">C22-200</td><td class="num"><svg class="bar-mark"><use href="#rebar"/></svg>22@200</td><td class="num">23</td>
              <td class="p-0"><svg width="205" height="38" class="d-block"><path d="M41 10V7h-4v25h163v-4h-5" fill="none" stroke="#000" stroke-width="2"/><text x="8" y="24">1950</text><text x="99" y="24">1950</text></svg></td><td class="num">4175</td><td>垂直加强筋</td></tr>
            <tr class="blank"><th>4</th><td></td><td></td><td></td><td></td><td></td><td></td></tr>
          </tbody>
        </table>
      </div>
      <div class="dlg-foot">
        <button class="push">插入</button>
        <button class="push">删除</button>
        <button class="push go ms-auto">确定</button>
        <button class="push">取消</button>
      </div>
    </div>
  </section>
</div>

<script src="https://cdn.jsdelivr.net/npm/bootstrap@5.3.0/dist/js/bootstrap.bundle.min.js"></script>
<script>
  // [row no., name, value, kind, has tick box]; # stands for the ribbed-bar mark
  const mark = '<svg class="bar-mark"><use href="#rebar"/></svg>';
  const rows = [
    [1, '名称', 'DQ1', 'link', 0], [2, '厚度(mm)', '350', '', 1], [3, '轴线距左墙皮距离', '(175)', '', 1],
    [4, '水平分布钢筋', '(2)#12@150', 'link', 1], [5, '垂直分布钢筋', '', 'link', 1], [6, '拉筋', 'ф6@600*600', 'link', 1],
    [7, '备注', '', '', 1], [8, '其它属性', '', 'group', 0], [9, '其它钢筋', '63,64,23', 'leaf', 0],
    [10, '汇总信息', '剪力墙', 'leaf', 1], [11, '保护层厚度(mm)', '(20)', 'leaf', 1], [12, '压墙筋', '3#16+3#20', 'leaf', 1],
    [13, '纵筋构造', '设置插筋', 'leaf', 1], [14, '插筋信息', '', 'leaf', 1], [15, '水平钢筋拐角增', '否', 'leaf', 0],
    [16, '计算设置', '按默认计算设置计算', 'leaf', 0], [17, '节点设置', '按默认节点设置计算', 'leaf', 0], [18, '搭接设置', '按默认搭接设置计算', 'leaf', 0],
    [19, '起点顶标高(m)', '-1.3', 'leaf', 1], [20, '终点顶标高(m)', '-1.3', 'leaf', 1], [21, '起点底标高(m)', '层底标高', 'leaf', 1],
    [22, '终点底标高(m)', '层底标高', 'leaf end', 1], [23, '锚固搭接', '', 'group', 0], [38, '显示样式', '', 'group', 0]
  ];
  document.querySelector('#propGrid tbody').innerHTML = rows.map(([n, name, val, kind, tick]) => {
    const fold = kind === 'group' ? `<button class="fold" aria-label="展开"><svg width="11" height="11"><path d="${n === 8 ? 'M2 5.500h7' : 'M2 5.500h7M5.500 2v7'}" stroke="#000"/></svg></button>` : '';
    const label = name.replace(/\(.*\)/, '<span class="num">$&</span>');
    const text = val.replace(/#/g, mark);
    const small = /^[\x20-\x7eф]*$/.test(val) ? 'num' : '';
    return `<tr class="${n === 9 ? 'picked' : ''}"><th class="${n === 9 ? 'hot' : ''}">${n}</th>
      <td class="p-0"><div class="cell-name ${kind}">${fold}<span>${label}</span></div></td>
      <td class="${small} ${n === 9 ? 'pick' : ''}"><span class="${/^[(ф]/.test(val) ? 'ps-1' : ''}">${text}</span></td>
      <td>${tick ? `<input class="tick mx-auto" type="checkbox" aria-label="附加 ${name}">` : ''}</td></tr>`;
  }).join('');
</script>
</body>
</html>
